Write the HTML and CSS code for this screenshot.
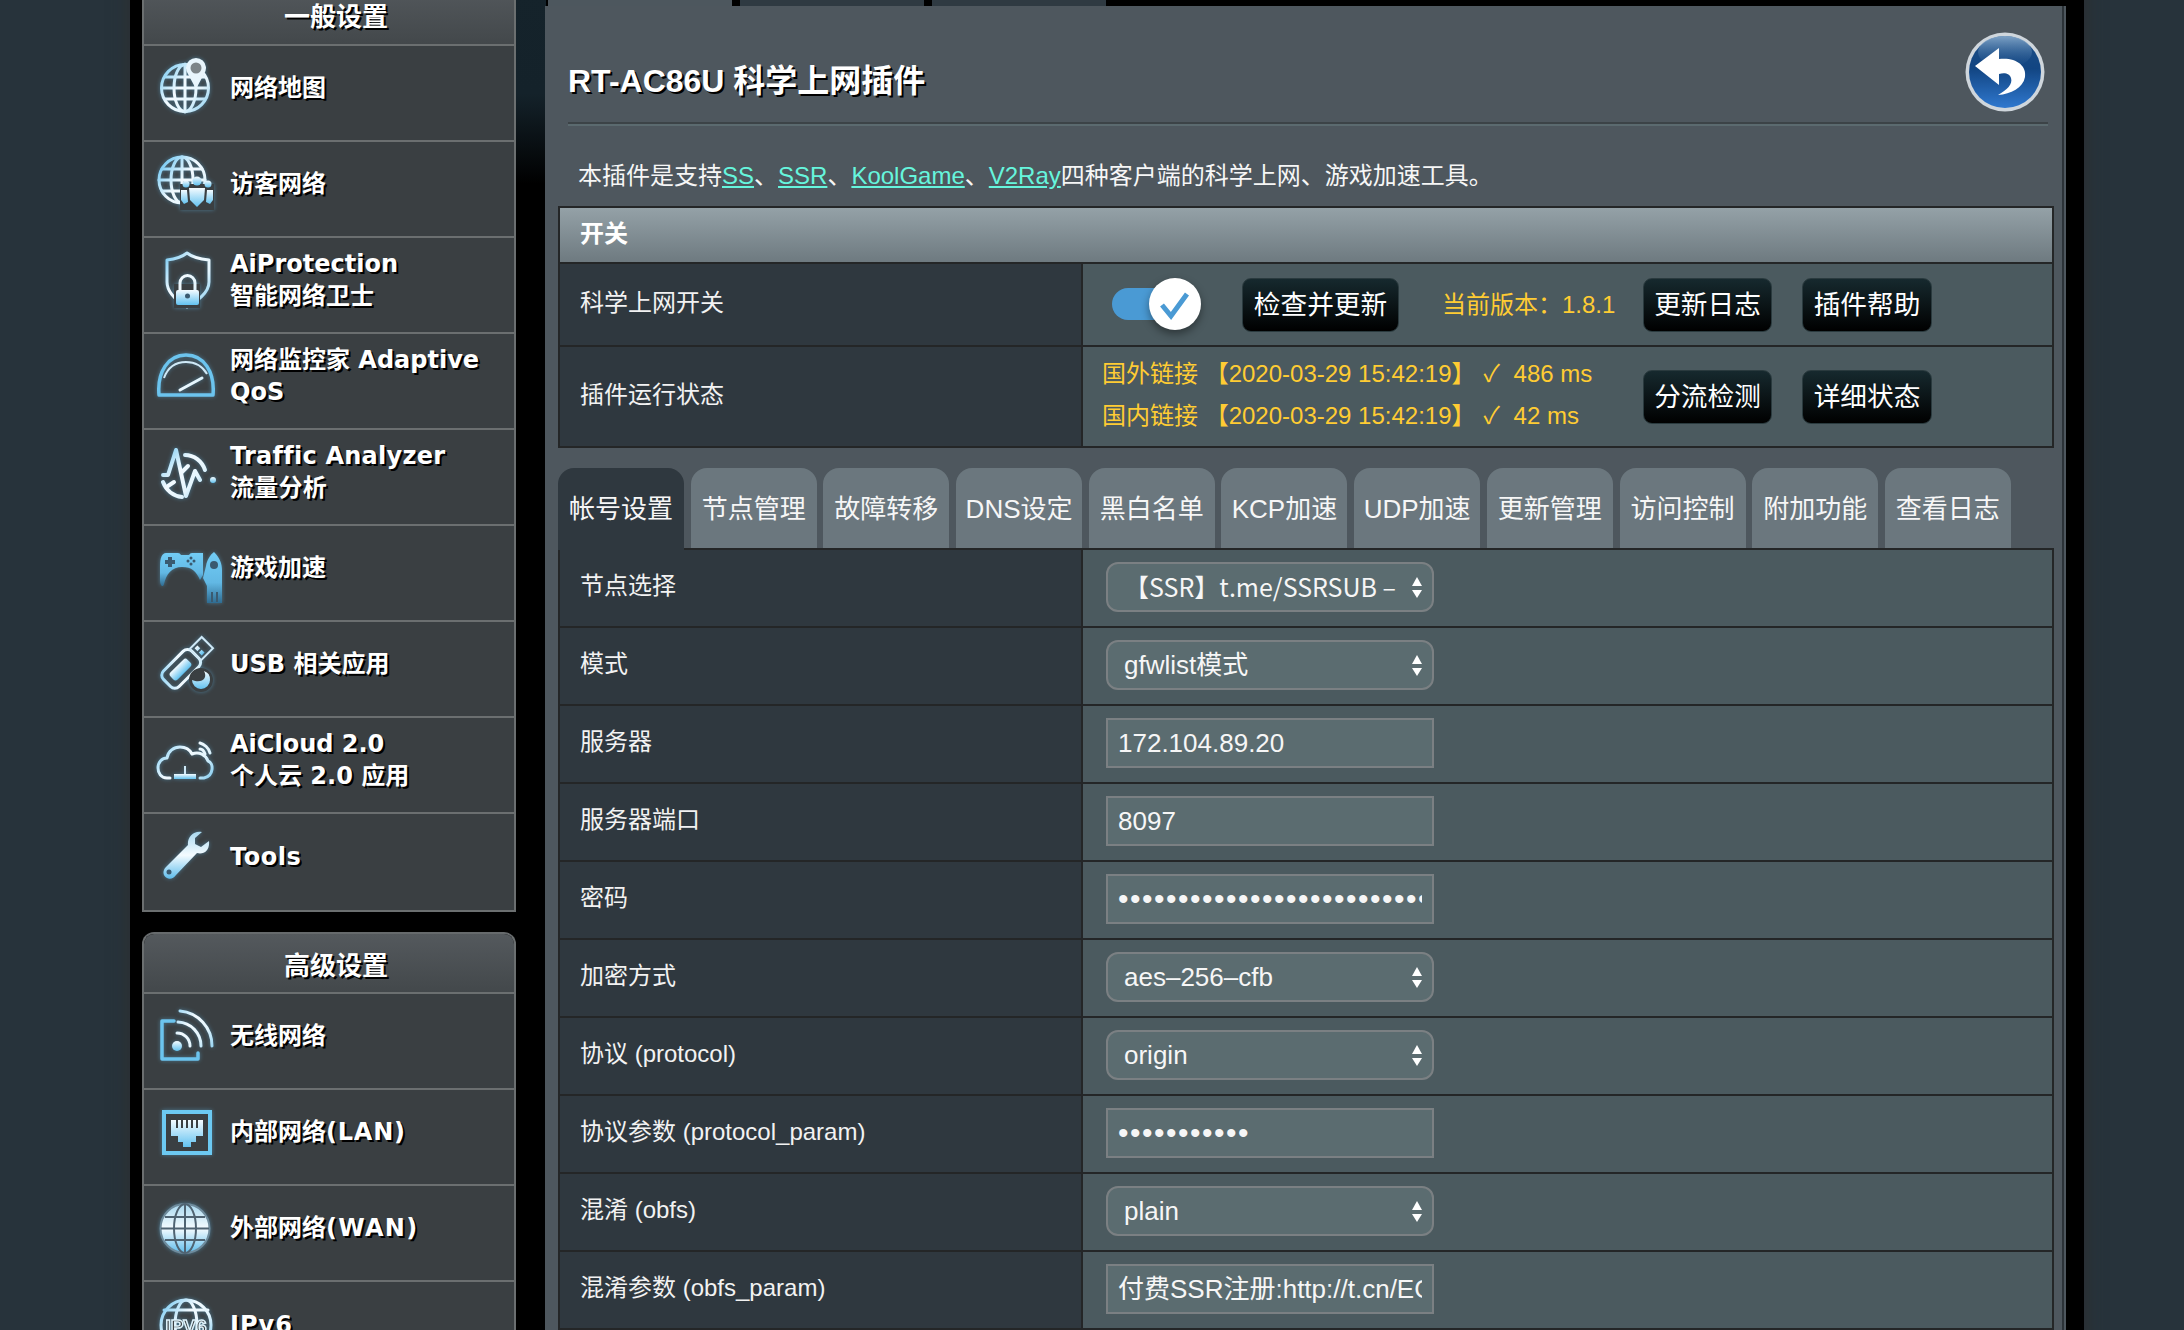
FILE: index.html
```html
<!DOCTYPE html>
<html lang="zh-CN">
<head>
<meta charset="utf-8">
<title>RT-AC86U 科学上网插件</title>
<link rel="stylesheet" href="styles.css">
</head>
<body>
<svg class="defs" width="0" height="0" aria-hidden="true">
  <defs>
    <linearGradient id="g" gradientUnits="userSpaceOnUse" x1="4" y1="16" x2="60" y2="62">
      <stop offset="0" stop-color="#72c8f2"/><stop offset=".38" stop-color="#f2faff"/><stop offset=".62" stop-color="#e4f5fd"/><stop offset="1" stop-color="#62bdea"/>
    </linearGradient>
    <linearGradient id="f" x1="0" y1="0" x2="0" y2="1">
      <stop offset="0" stop-color="#f4fbff"/><stop offset="1" stop-color="#62c2f0"/>
    </linearGradient>
    <linearGradient id="p" x1="0" y1="0" x2="0" y2="1">
      <stop offset="0" stop-color="#72cdf6"/><stop offset=".6" stop-color="#62b8e4"/><stop offset="1" stop-color="#2f6c92"/>
    </linearGradient>
    <linearGradient id="w" x1="0" y1="0" x2="0" y2="1">
      <stop offset="0" stop-color="#a9d9f0"/><stop offset=".5" stop-color="#f4fbff"/><stop offset="1" stop-color="#5fbdec"/>
    </linearGradient>
    <linearGradient id="b" x1="0" y1="0" x2="0" y2="1">
      <stop offset="0" stop-color="#1d4f86"/><stop offset=".45" stop-color="#124582"/><stop offset="1" stop-color="#2f78cf"/>
    </linearGradient>
    <linearGradient id="gl" x1="0" y1="0" x2="0" y2="1">
      <stop offset="0" stop-color="#7fa3c6"/><stop offset="1" stop-color="#2a5c96" stop-opacity="0"/>
    </linearGradient>
  </defs>
</svg>
<div class="page">
  <aside class="sidebar">
    <section class="menu">
      <h2 class="menu-head">一般设置</h2>
      <a class="nav-row"><svg class="nav-icon" viewBox="0 0 64 64"><g class="line"><circle cx="31" cy="34" r="23.5"/><ellipse cx="31" cy="34" rx="11" ry="23.5"/><path d="M31 10v48M8 34h46M11 23h40M11 45h40"/></g><path class="pin" d="M42 35 34 20a10 10 0 1 1 16 0Z"/><circle class="pin-hole" cx="42" cy="14" r="5.5"/></svg><span class="nav-text">网络地图</span></a>
      <a class="nav-row"><svg class="nav-icon" viewBox="0 0 64 64"><g class="line"><circle cx="28" cy="30" r="23"/><ellipse cx="28" cy="30" rx="11" ry="23"/><path d="M28 7v46M5 30h46M8 19h40M8 41h40"/></g><path class="cut" d="M26 34h34v26H26z"/><circle class="solid" cx="43" cy="31" r="4.5"/><circle class="solid" cx="32" cy="34" r="3.5"/><circle class="solid" cx="54" cy="34" r="3.5"/><path class="solid" d="M35 38h16l-1 12-7 7-7-7Z"/><path class="solid" d="M27 40h6l1 12-4 2-3-4ZM53 40h6v10l-3 4-4-2Z"/></svg><span class="nav-text">访客网络</span></a>
      <a class="nav-row"><svg class="nav-icon" viewBox="0 0 64 64"><path class="line" d="M33 7C28 11 21 13 13 14V36C13 47 23 55 33 61 43 55 55 47 55 36V14C46 13 38 11 33 7Z"/><path class="cut" d="M20 38h26v24H20z"/><path class="line" d="M26 45V37a7.5 7.5 0 0 1 15 0V45"/><rect class="solid" x="22" y="44" width="23" height="15" rx="2"/><circle class="hole" cx="33.500" cy="50" r="2.500"/></svg><span class="nav-text">AiProtection<br>智能网络卫士</span></a>
      <a class="nav-row"><svg class="nav-icon" viewBox="0 0 64 64"><path class="line line-blue" d="M5 53C3 30 14 13 32 13 50 13 61 30 59 53Z"/><path class="thin" d="M10 36C14 25 22 20 32 20 42 20 49 25 53 32"/><path class="line" d="M26 48 48 36"/></svg><span class="nav-text">网络监控家 Adaptive QoS</span></a>
      <a class="nav-row"><svg class="nav-icon" viewBox="0 0 64 64"><g class="line line-thick"><path d="M9 37H14L22 12 32 58 41 33 46 42"/><path d="M31 17C40 17 48 23 51 32"/><path d="M9 44C12 52 19 58 28 59"/><path d="M28 34 34 28M20 44 14 48"/></g><circle class="solid" cx="59" cy="42" r="3"/></svg><span class="nav-text nav-spread">Traffic Analyzer<br>流量分析</span></a>
      <a class="nav-row"><svg class="nav-icon nav-icon-big" viewBox="0 0 70 70"><path class="fillp" d="M12 19H24a4 4 0 0 1 3 2H35a4 4 0 0 1 3-2H49V41L46 46C42 37 38 33 28 33 18 33 12 40 10 50 9 54 6 52 6 46V32C6 24 8 19 12 19Z"/><path class="fillp" d="M60 18C66 24 68 30 68 36V69H53V52L49 44 52 32C53 26 56 21 60 18Z"/><path class="hole" d="M11 26h3v-3h4v3h3v4h-3v3h-4v-3h-3Z"/><circle class="hole" cx="37" cy="24" r="1.500"/><circle class="hole" cx="37" cy="30" r="1.500"/><circle class="hole" cx="34" cy="27" r="1.500"/><circle class="hole" cx="40" cy="27" r="1.500"/><circle class="hole" cx="60" cy="31" r="4"/><path class="hole" d="M57 58h2v10h-2zM62 58h2v10h-2z"/></svg><span class="nav-text nav-text-big">游戏加速</span></a>
      <a class="nav-row"><svg class="nav-icon" viewBox="0 0 64 64"><g transform="rotate(-45 30 36)"><rect class="line" x="6" y="25" width="40" height="22" rx="6"/><rect class="solid" x="13" y="31" width="24" height="10" rx="3"/><rect class="thin" x="46" y="28" width="17" height="16"/><path class="solid" d="M50 31h4v4h-4zM50 37h4v4h-4z"/></g><circle class="cutline" cx="47" cy="50" r="11"/><path class="solid" d="M38 50a9 9 0 0 0 18 0 9 9 0 0 0-6-9C54 48 48 54 38 50Z"/></svg><span class="nav-text">USB 相关应用</span></a>
      <a class="nav-row"><svg class="nav-icon" viewBox="0 0 64 64"><g class="line"><path d="M16 52H13C7 52 4 47 4 42 4 36 8 32 13 32 14 25 20 21 26 21 32 21 36 24 38 28 45 25 52 29 54 35 60 37 60 50 50 52H46"/><path d="M46 17C50 18 55 22 56 27"/><path d="M46 23C48 23 50 25 51 28"/></g><path class="thin" d="M31 40V48"/><rect class="solid" x="20" y="48" width="22" height="5"/></svg><span class="nav-text">AiCloud 2.0<br>个人云 2.0 应用</span></a>
      <a class="nav-row"><svg class="nav-icon" viewBox="0 0 64 64"><path class="fillw" d="M48 10C40 8 33 15 34 23L12 45C8 49 9 54 13 56 16 58 20 56 22 53L43 31C50 33 56 28 55 19L47 25 41 22 41 16Z"/><circle class="hole" cx="15" cy="50" r="2.500"/></svg><span class="nav-text nav-wide">Tools</span></a>
    </section>
    <section class="menu menu-adv">
      <h2 class="menu-head">高级设置</h2>
      <a class="nav-row"><svg class="nav-icon" viewBox="0 0 64 64"><path class="line line-blue" d="M20 19H8V57H44V51"/><circle class="solid" cx="23" cy="44" r="5"/><g class="line"><path d="M23 31A13 13 0 0 1 36 44"/><path d="M24 20A24 24 0 0 1 47 44"/><path d="M26 9A35 35 0 0 1 58 44"/></g></svg><span class="nav-text">无线网络</span></a>
      <a class="nav-row"><svg class="nav-icon" viewBox="0 0 64 64"><rect class="box" x="10" y="14" width="46" height="41"/><path class="solid" d="M17 22H49V38H42V44H37V49H29V44H24V38H17Z"/><path class="teeth" d="M23 22v8M28 22v8M33 22v8M38 22v8M43 22v8"/></svg><span class="nav-text">内部网络<span class="paren">(LAN)</span></span></a>
      <a class="nav-row"><svg class="nav-icon" viewBox="0 0 64 64"><circle class="globe" cx="31" cy="34.500" r="24.500"/><g class="grid"><ellipse cx="31" cy="34.500" rx="11" ry="24.500"/><path d="M31 10v49M7 34.500h48M11 23h40M11 46h40"/></g></svg><span class="nav-text">外部网络<span class="paren paren-wan">(WAN)</span></span></a>
      <a class="nav-row"><svg class="nav-icon" viewBox="0 0 64 64"><g class="line"><circle cx="32" cy="35" r="25"/><ellipse cx="32" cy="35" rx="11" ry="25"/><path d="M10 20h44"/></g><text class="v6" x="32" y="43" text-anchor="middle">IPV6</text></svg><span class="nav-text nav-wide-more">IPv6</span></a>
    </section>
  </aside>

  <main class="main">
    <div class="top-tabs"><span class="top-tab top-tab-on"></span><span class="top-tab"></span><span class="top-tab top-tab-last"></span></div>
    <div class="panel">
      <header class="head">
        <h1 class="title">RT-AC86U 科学上网插件</h1>
        <svg class="back" viewBox="0 0 80 80"><circle cx="40" cy="40" r="39.500" fill="#cfd6dc"/><circle cx="40" cy="40" r="36" fill="url(#b)"/><ellipse cx="40" cy="20" rx="27" ry="16" fill="url(#gl)"/><path fill="#fff" d="M10 34 34 16V53ZM34 27C50 25 62 33 60 45 58 56 46 62 33 63 42 58 48 52 46 46 45 42 40 40 34 42Z"/></svg>
      </header>
      <div class="rule"></div>
      <p class="desc">本插件是支持<a class="link">SS</a>、<a class="link">SSR</a>、<a class="link">KoolGame</a>、<a class="link">V2Ray</a>四种客户端的科学上网、游戏加速工具。</p>

      <section class="card">
        <div class="card-head">开关</div>
        <div class="row row-switch">
          <div class="label label-up">科学上网开关</div>
          <div class="value value-switch">
            <div class="toggle"><span class="track"></span><span class="knob"><svg class="tick" viewBox="0 0 52 52"><path d="M13 27 22 38 38 16"/></svg></span></div>
            <button class="btn btn-check">检查并更新</button>
            <span class="version">当前版本：1.8.1</span>
            <button class="btn btn-log">更新日志</button>
            <button class="btn btn-help">插件帮助</button>
          </div>
        </div>
        <div class="row row-status">
          <div class="label label-up">插件运行状态</div>
          <div class="value value-status">
            <div class="status">
              <div class="status-line">国外链接 【2020-03-29 15:42:19】<span class="mark">✓</span>486 ms</div>
              <div class="status-line">国内链接 【2020-03-29 15:42:19】<span class="mark">✓</span>42 ms</div>
            </div>
            <button class="btn btn-log">分流检测</button>
            <button class="btn btn-help">详细状态</button>
          </div>
        </div>
      </section>

      <nav class="tabs">
        <a class="tab tab-on">帐号设置</a><a class="tab">节点管理</a><a class="tab">故障转移</a><a class="tab">DNS设定</a><a class="tab">黑白名单</a><a class="tab">KCP加速</a><a class="tab">UDP加速</a><a class="tab">更新管理</a><a class="tab">访问控制</a><a class="tab">附加功能</a><a class="tab">查看日志</a>
      </nav>

      <section class="form">
        <div class="row form-row"><div class="label">节点选择</div><div class="value"><div class="ctl sel"><span class="ctl-text cjk">【SSR】t.me/SSRSUB –</span><span class="arrows"></span></div></div></div>
        <div class="row form-row"><div class="label">模式</div><div class="value"><div class="ctl sel"><span class="ctl-text">gfwlist模式</span><span class="arrows"></span></div></div></div>
        <div class="row form-row"><div class="label">服务器</div><div class="value"><div class="ctl"><span class="ctl-text">172.104.89.20</span></div></div></div>
        <div class="row form-row"><div class="label">服务器端口</div><div class="value"><div class="ctl"><span class="ctl-text">8097</span></div></div></div>
        <div class="row form-row"><div class="label">密码</div><div class="value"><div class="ctl"><span class="ctl-text dots">••••••••••••••••••••••••••••••</span></div></div></div>
        <div class="row form-row"><div class="label">加密方式</div><div class="value"><div class="ctl sel"><span class="ctl-text">aes–256–cfb</span><span class="arrows"></span></div></div></div>
        <div class="row form-row"><div class="label">协议 (protocol)</div><div class="value"><div class="ctl sel"><span class="ctl-text">origin</span><span class="arrows"></span></div></div></div>
        <div class="row form-row"><div class="label">协议参数 (protocol_param)</div><div class="value"><div class="ctl"><span class="ctl-text dots">•••••••••••</span></div></div></div>
        <div class="row form-row"><div class="label">混淆 (obfs)</div><div class="value"><div class="ctl sel"><span class="ctl-text">plain</span><span class="arrows"></span></div></div></div>
        <div class="row form-row"><div class="label">混淆参数 (obfs_param)</div><div class="value"><div class="ctl"><span class="ctl-text">付费SSR注册:http://t.cn/EGJIyrl</span></div></div></div>
      </section>
    </div>
  </main>
</div>
</body>
</html>
```

FILE: styles.css
```css
* { box-sizing: border-box; }
html, body { height: 100%; margin: 0; overflow: hidden; }
body { background: #27333b; color: #f4f4f4; font-family: "Liberation Sans", "Noto Sans CJK SC", sans-serif; font-size: 24px; }
.defs { position: absolute; }

.page {
  display: flex;
  width: 1954px;
  height: 1400px;
  margin: -16px 0 0 130px;
  padding-left: 12px;
  background: linear-gradient(#15232b 0, #14222a 110px, #000 200px) no-repeat 386px 0 / 30px 230px, #000;
  box-shadow: 0 0 16px 2px #2c2f31;
}

/* sidebar */
.sidebar { width: 374px; flex: none; font-family: "DejaVu Sans", "Noto Sans CJK SC", sans-serif; }
.menu { border: solid #6b6f70; border-width: 0 2px 2px; }
.menu-adv { margin-top: 20px; border-top: 2px solid #666a6c; border-radius: 12px 12px 0 0; overflow: hidden; }
.menu-head {
  height: 60px;
  margin: 0;
  padding: 16px 0 0 14px;
  background: linear-gradient(#54595d, #43484b);
  font-size: 26px;
  line-height: 34px;
  font-weight: 700;
  text-align: center;
  color: #fff;
  text-shadow: 2px 2px 0 #000;
}
.menu-adv .menu-head { height: 58px; padding-top: 15px; }
.nav-row {
  display: flex;
  align-items: center;
  height: 96px;
  padding: 0 0 10px 10px;
  background: #3a3f42;
  border-top: 2px solid #6b6f70;
}
.menu > .nav-row:last-child { height: 98px; }
.nav-icon {
  width: 64px; height: 64px; flex: none;
  align-self: flex-start;
  margin-top: 8px;
  overflow: visible;
  filter: blur(.6px) drop-shadow(0 0 2px rgba(100, 190, 240, .45));
}
.nav-icon-big { width: 70px; height: 70px; margin-right: -6px; }
.nav-text {
  width: 276px;
  margin-left: 12px;
  font-size: 24px;
  line-height: 32px;
  font-weight: 700;
  color: #fff;
  text-shadow: 2px 2px 0 #000;
}
.nav-spread { letter-spacing: .25px; }
.nav-wide { letter-spacing: .5px; }
.nav-wide-more { letter-spacing: 1px; }
.paren { letter-spacing: .8px; }
.paren-wan { letter-spacing: 1.300px; }
.line { fill: none; stroke: url(#g); stroke-width: 3; stroke-linecap: round; stroke-linejoin: round; }
.line-blue { stroke: #6cc4ee; stroke-width: 3.500; }
.line-thick { stroke-width: 4; }
.thin { fill: none; stroke: #cfe9f7; stroke-width: 2; }
.solid { fill: url(#f); }
.fillp { fill: url(#p); }
.fillw { fill: url(#w); }
.hole { fill: #3a5a70; }
.cut { fill: #3a3f42; }
.cutline { fill: #3a3f42; stroke: #3a3f42; stroke-width: 2; }
.pin { fill: #e8f5fc; }
.pin-hole { fill: #7c8488; }
.box { fill: #3a3f42; stroke: #6cc9f2; stroke-width: 4; }
.teeth { stroke: #3a3f42; stroke-width: 2; fill: none; }
.globe { fill: url(#w); stroke: #6f8b9c; stroke-width: 2; }
.grid { fill: none; stroke: #4f6372; stroke-width: 2; }
.v6 { font-family: "Liberation Sans", sans-serif; font-weight: 700; font-size: 19px; fill: #3a3f42; stroke: #dff3fc; stroke-width: 1.500; }

/* main */
.main { width: 1521px; margin-left: 29px; flex: none; }
.top-tabs { display: flex; gap: 8px; height: 22px; padding-left: 3px; }
.top-tab { width: 184px; background: #2f3a42; }
.top-tab-on { background: #4d575e; }
.top-tab-last { width: 174px; }
.panel {
  height: 1378px;
  padding: 0 12px 0 13px;
  background: #4e575e;
  box-shadow: inset -2px 0 0 #4e575e, inset -4px 0 0 #2c3338;
}
.head { display: flex; justify-content: space-between; align-items: flex-start; height: 116px; padding: 0 9px 0 10px; }
.title { margin: 55px 0 0; font-size: 32px; line-height: 40px; font-weight: 700; color: #fff; text-shadow: 2px 2px 0 #000; }
.back { width: 80px; height: 80px; margin-top: 26px; filter: blur(.5px); }
.rule { height: 4px; margin: 0 6px 0 10px; border-top: 2px solid #3c4347; border-bottom: 2px solid #5b6a6f; }
.desc { height: 80px; margin: 0; padding: 34px 0 0 20px; font-size: 24px; line-height: 32px; color: #f6f6f6; }
.link { color: #66f5dd; text-decoration: underline; }

.card { border: 2px solid #242627; }
.card-head {
  height: 56px;
  padding: 9px 0 0 20px;
  background: linear-gradient(#94a1a7, #6e7a80);
  border-bottom: 2px solid #242627;
  font-size: 24px;
  line-height: 34px;
  font-weight: 700;
  color: #fff;
}
.row { display: flex; }
.label {
  display: flex;
  align-items: center;
  width: 523px;
  flex: none;
  padding: 0 0 9px 20px;
  background: #2f383f;
  border-right: 2px solid #242627;
  color: #f2f2f2;
  font-size: 24px;
}
.label-up { padding-bottom: 9px; }
.value { flex: 1; display: flex; align-items: center; background: #4b5a5f; }
.row-switch { height: 83px; border-bottom: 2px solid #242627; }
.row-status { height: 99px; }
.value-switch { padding-left: 29px; }
.value-status { padding-left: 19px; }

.toggle { width: 89px; height: 54px; flex: none; position: relative; }
.track { position: absolute; left: 0; top: 10px; width: 66px; height: 32px; border-radius: 16px; background: #4a9ad4; }
.knob { position: absolute; right: 0; top: 0; width: 52px; height: 52px; border-radius: 50%; background: #fff; box-shadow: 0 4px 8px rgba(0,0,0,.4); }
.tick { display: block; width: 52px; height: 52px; fill: none; stroke: #4a9ad4; stroke-width: 5; }

.btn {
  height: 54px;
  flex: none;
  padding: 0;
  border: 1px solid #2a3a3e;
  border-radius: 9px;
  background: linear-gradient(#16292e, #000);
  color: #fff;
  font: 26.667px "Liberation Sans", "Noto Sans CJK SC", sans-serif;
  line-height: 50px;
}
.btn-check { width: 157px; margin-left: 41px; }
.btn-log { width: 129px; margin-left: 27px; }
.btn-help { width: 130px; margin-left: 30px; }
.version { width: 174px; margin-left: 43px; flex: none; color: #ffcc33; padding-bottom: 4px; white-space: nowrap; }
.status { width: 514px; flex: none; color: #ffcc33; padding-bottom: 4px; }
.status-line { height: 42px; line-height: 42px; white-space: nowrap; }
.mark { display: inline-block; width: 38px; padding-left: 8px; }

.tabs { display: flex; gap: 6.700px; height: 80px; margin-top: 20px; position: relative; z-index: 1; }
.tab {
  width: 126px;
  flex: none;
  padding-top: 23px;
  border-radius: 16px 16px 0 0;
  background: #6b777e;
  color: #f6f6f6;
  font-size: 26px;
  line-height: 36px;
  text-align: center;
  white-space: nowrap;
}
.tab-on { background: #2f383f; height: 82px; }

.form { border: solid #242627; border-width: 2px 2px 0; }
.form-row { height: 78px; border-bottom: 2px solid #242627; }
.form-row .value { padding: 0 0 2px 23px; }
.ctl {
  display: flex;
  align-items: center;
  width: 328px;
  height: 50px;
  padding: 0 10px;
  border: 2px solid #7b8083;
  background: #5b6c70;
  color: #f6f6f6;
  font-size: 26px;
}
.sel { padding: 0 9px 0 16px; border-radius: 12px; }
.ctl-text { flex: 1; min-width: 0; overflow: hidden; white-space: nowrap; line-height: 40px; }
.cjk { font-family: "Noto Sans CJK SC", sans-serif; font-size: 25px; padding-bottom: 2px; }
.dots { font-size: 30px; letter-spacing: 1.500px; }
.arrows { width: 11px; height: 21px; flex: none; position: relative; }
.arrows::before,
.arrows::after {
  content: "";
  position: absolute;
  left: 0;
  border: solid transparent;
}
.arrows::before { top: 0; border-width: 0 5.500px 9px; border-bottom-color: #fff; }
.arrows::after { bottom: 0; border-width: 8px 5.500px 0; border-top-color: #fff; }
```
